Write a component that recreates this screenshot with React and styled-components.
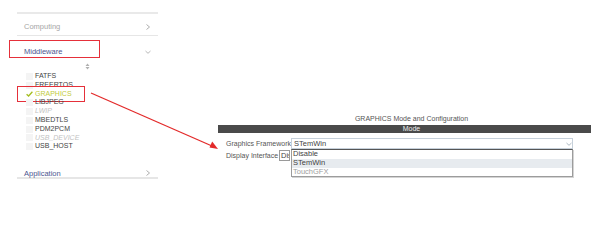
import React from 'react'
import styled, { createGlobalStyle } from 'styled-components'

const Global = createGlobalStyle`
body{
  margin:0;
  background:#fff;
  font-family:"Liberation Sans", Arial, sans-serif;
}
`
const Page = styled.div`
position: relative;
width: 600px;
height: 243px;
display: flex;
background: #fff;
overflow: hidden;
`
const Sidebar = styled.div`
width: 141px;
margin-left: 17px;
margin-top: 12px;
border-top: 2px solid #e9e9e9;
align-self: flex-start;
display: flex;
flex-direction: column;
`
const Category = styled.div`
position: relative;
display: flex;
align-items: center;
justify-content: space-between;
height: ${p => p.h}px;
padding: ${p => p.pad || '0 7px 0 7px'};
box-sizing: border-box;
font-size: 7.5px;
color: ${p => p.muted ? '#a6a6a6' : '#4c5590'};
border-bottom: ${p => p.line ? `${p.line}px solid #e6e6e6` : 'none'};
`
const Chevron = styled.svg`
width: 6px;
height: 6px;
`
const RedBox = styled.span`
position: absolute;
border: 1.5px solid #e5303a;
box-sizing: border-box;
pointer-events: none;
`
const SortRow = styled.div`
height: 13px;
display: flex;
justify-content: center;
align-items: center;
padding-top: 1px;
box-sizing: border-box;
`
const List = styled.ul`
list-style: none;
margin: 0;
padding: 0 0 0 9px;
`
const Item = styled.li`
position: relative;
display: flex;
align-items: center;
height: 8.8px;
font-size: 7px;
line-height: 8.8px;
color: ${p => p.active ? '#bfcb3c' : p.off ? '#c2c2c2' : '#444'};
font-style: ${p => p.off ? 'italic' : 'normal'};
`
const Box = styled.span`
width: 7px;
height: 7px;
margin-right: 2px;
display: flex;
align-items: center;
justify-content: center;
background: ${p => p.checked ? 'transparent' : '#f4f4f4'};
`
const Main = styled.div`
flex: 1;
padding: 113px 9px 0 60px;
display: flex;
flex-direction: column;
`
const Title = styled.div`
height: 11px;
font-size: 7px;
color: #555;
text-align: center;
padding-left: 14px;
line-height: 11px;
`
const Bar = styled.div`
margin-top: 1px;
height: 8px;
background: #4a4a4a;
color: #eee;
font-size: 7px;
line-height: 8px;
text-align: center;
padding-left: 14px;
`
const Form = styled.div`
margin-top: 5px;
padding-left: 8px;
display: flex;
flex-direction: column;
gap: 1px;
`
const Row = styled.div`
position: relative;
display: flex;
align-items: center;
height: 11px;
`
const Label = styled.span`
font-size: 7px;
color: #555;
width: ${p => p.w}px;
white-space: nowrap;
`
const Select = styled.div`
width: 282px;
height: 11px;
box-sizing: border-box;
border: 1px solid #c6d0da;
font-size: 7.5px;
color: #444;
padding-left: 2px;
display: flex;
align-items: center;
justify-content: space-between;
`
const Mini = styled.div`
width: 11px;
height: 11px;
box-sizing: border-box;
border: 1px solid #9a9a9a;
font-size: 7.5px;
color: #444;
overflow: hidden;
padding-left: 1px;
white-space: nowrap;
`
const Dropdown = styled.div`
position: absolute;
left: 65px;
top: 11px;
width: 282px;
box-sizing: border-box;
border: 1px solid #9c9c9c;
border-top-color: #555;
box-shadow: 1px 1px 0 #d4d4d4;
background: #fff;
z-index: 2;
`
const Option = styled.div`
height: 8.8px;
line-height: 8.8px;
font-size: 7.5px;
padding-left: 1px;
color: ${p => p.dim ? '#a0a0a0' : '#444'};
background: ${p => p.sel ? '#e7ebef' : 'transparent'};
`
const Arrow = styled.svg`
position: absolute;
left: 0;
top: 0;
pointer-events: none;
z-index: 3;
`

const items = [
  { name: 'FATFS' },
  { name: 'FREERTOS' },
  { name: 'GRAPHICS', active: true },
  { name: 'LIBJPEG' },
  { name: 'LWIP', off: true },
  { name: 'MBEDTLS' },
  { name: 'PDM2PCM' },
  { name: 'USB_DEVICE', off: true },
  { name: 'USB_HOST' },
]

const Right = () => (
  <Chevron viewBox="0 0 6 6"><path d="M1.5 0.5 L4.5 3 L1.5 5.5" fill="none" stroke="#999" strokeWidth="0.8" /></Chevron>
)
const Down = ({ c = '#999' }) => (
  <Chevron viewBox="0 0 6 6"><path d="M0.5 2 L3 4.3 L5.5 2" fill="none" stroke={c} strokeWidth="0.7" /></Chevron>
)

export default function App() {
  return (
    <Page>
      <Global />
      <Sidebar>
        <Category h={22} line={1} pad="4px 7px 0 7px" muted>
          <span>Computing</span>
          <Right />
        </Category>
        <Category h={23} pad="8px 7px 0 7px">
          <span>Middleware</span>
          <Down />
          <RedBox style={{ left: -8, top: 4, width: 91, height: 18 }} />
        </Category>
        <SortRow>
          <svg width="5" height="7" viewBox="0 0 5 7">
            <path d="M2.5 0.5 L4.5 3 L0.5 3 Z M2.5 6.5 L4.5 4 L0.5 4 Z" fill="#b0b0b0" />
          </svg>
        </SortRow>
        <List>
          {items.map(it => (
            <Item key={it.name} active={it.active} off={it.off}>
              <Box checked={it.active}>
                {it.active && (
                  <svg width="7" height="6" viewBox="0 0 7 6">
                    <path d="M0.6 3.2 L2.6 5 L6.4 0.8" fill="none" stroke="#a3bd1e" strokeWidth="1.3" />
                  </svg>
                )}
              </Box>
              {it.name}
              {it.active && <RedBox style={{ left: -9, top: -4, width: 68, height: 16 }} />}
            </Item>
          ))}
        </List>
        <Category h={16} line={2} pad="10px 7px 4px 7px" style={{ marginTop: 12 }}>
          <span>Application</span>
          <Right />
        </Category>
      </Sidebar>
      <Main>
        <Title>GRAPHICS Mode and Configuration</Title>
        <Bar>Mode</Bar>
        <Form>
          <Row>
            <Label w={65}>Graphics Framework</Label>
            <Select>
              <span>STemWin</span>
              <Down c="#8a9aa8" />
            </Select>
            <Dropdown>
              <Option>Disable</Option>
              <Option sel>STemWin</Option>
              <Option dim>TouchGFX</Option>
            </Dropdown>
          </Row>
          <Row>
            <Label w={53}>Display Interface</Label>
            <Mini>Dis</Mini>
          </Row>
        </Form>
      </Main>
      <Arrow width="600" height="243">
        <line x1="91" y1="93" x2="212" y2="146" stroke="#e32a2a" strokeWidth="1.3" />
        <path d="M218 149 L209.5 147.6 L212.2 141.6 Z" fill="#e32a2a" />
      </Arrow>
    </Page>
  )
}
